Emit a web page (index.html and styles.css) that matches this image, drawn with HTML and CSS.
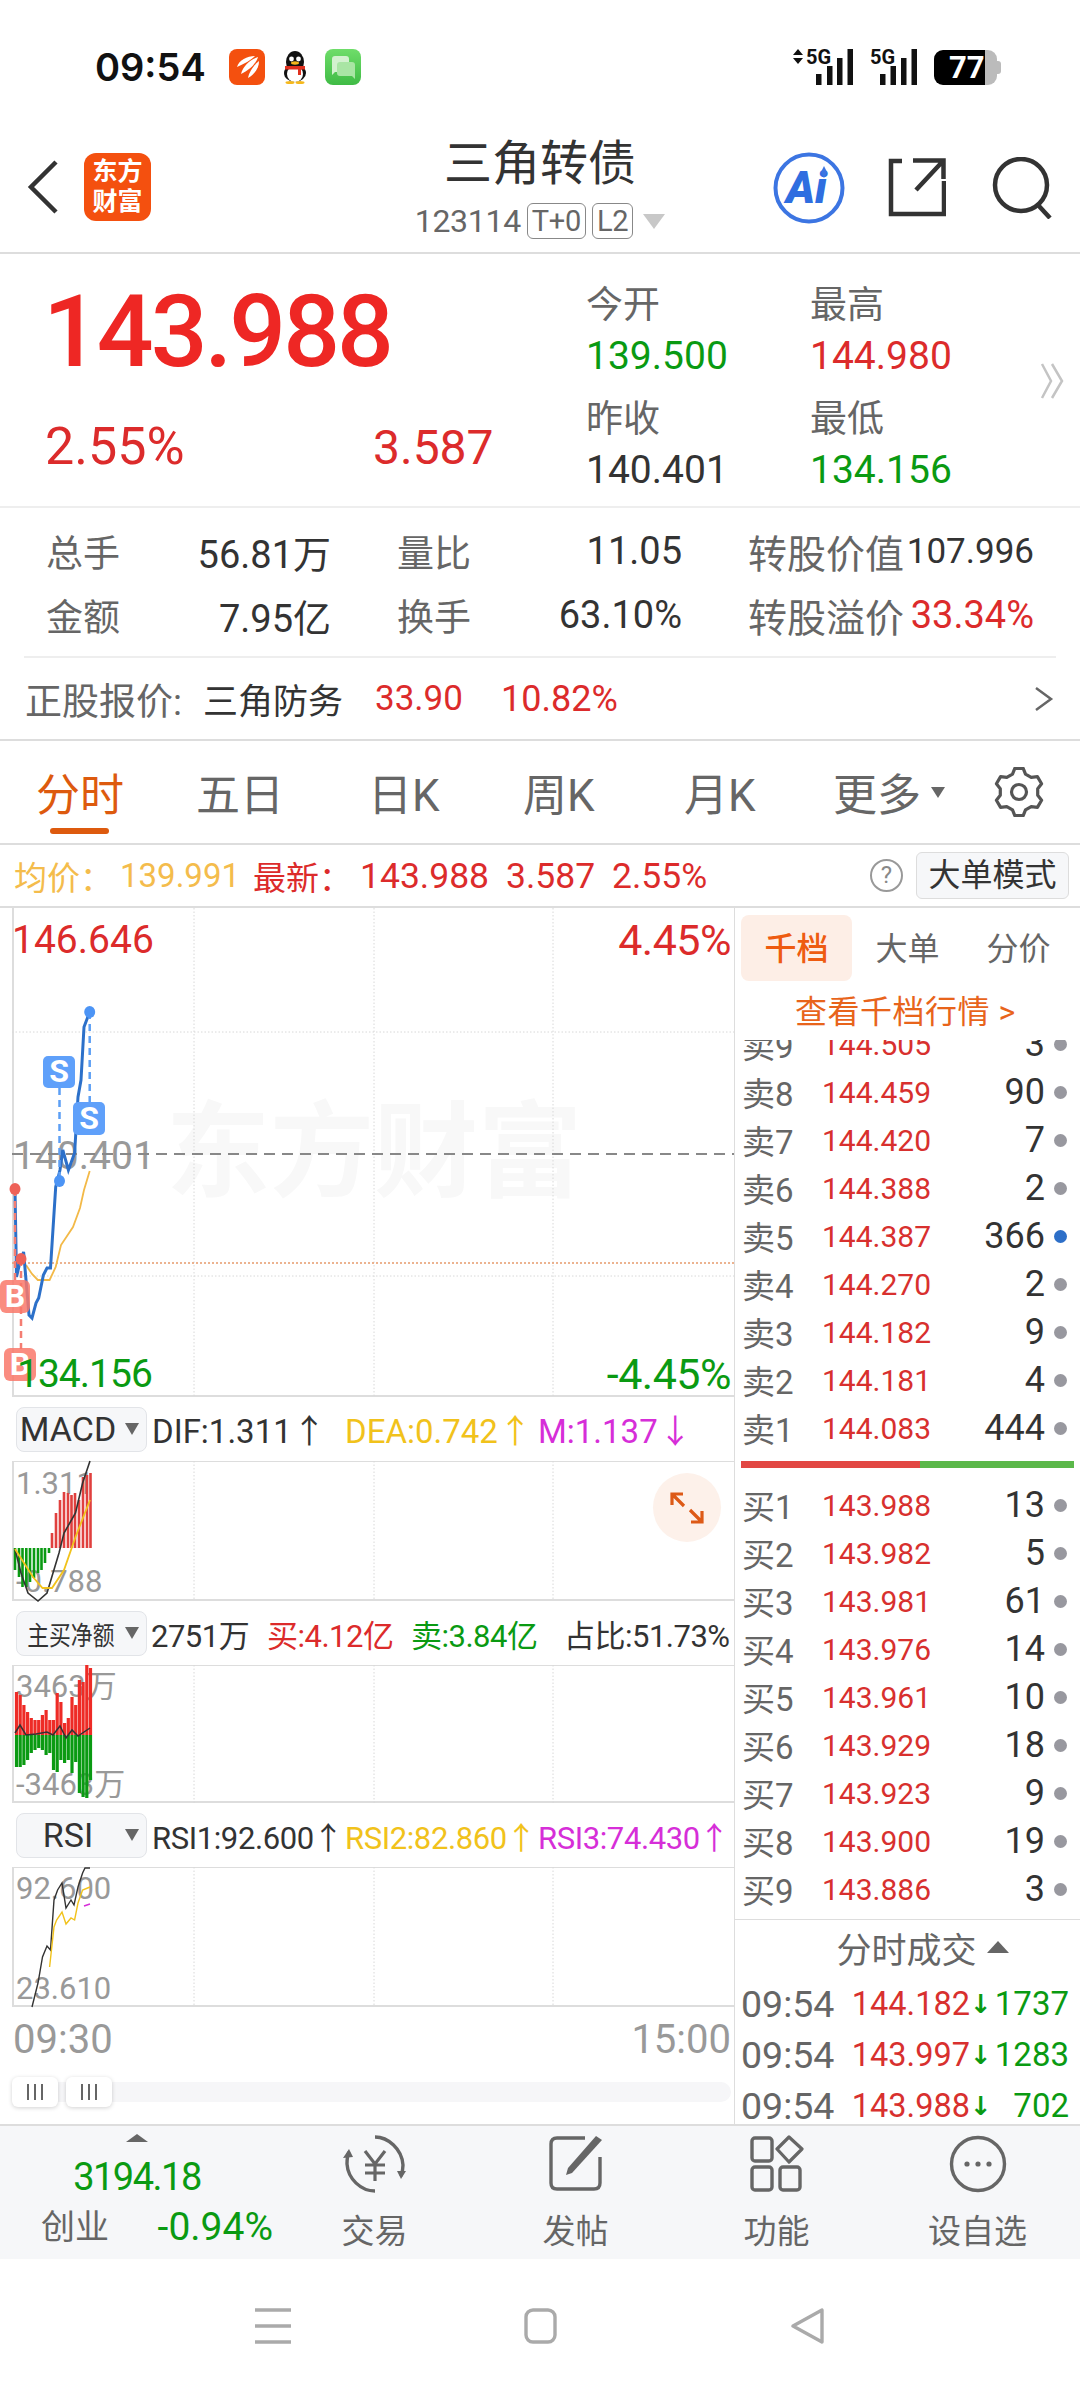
FILE: index.html
```html
<!DOCTYPE html>
<html lang="zh">
<head>
  <meta charset="UTF-8" />
  <meta name="viewport" content="width=device-width, initial-scale=1.0" />
  <title>三角转债</title>
  <link rel="stylesheet" href="styles.css">
</head>
<body>
<div class="page">

  <!-- Status bar -->
  <div class="status">
    <span class="clock">09:54</span>
    <svg class="app-icon" width="36" height="36" viewBox="0 0 36 36">
      <rect width="36" height="36" rx="8" fill="#f4500f"/>
      <path d="M8 18C10 11 18 7 26 7C22 11 15 15 8 18Z" fill="#fff"/>
      <path d="M12 25C14 17 21 11 29 8C27 15 20 21 12 25Z" fill="#fff"/>
      <path d="M19 29C20 23 25 16 30 12C30 19 26 25 19 29Z" fill="#fff"/>
    </svg>
    <svg class="qq-icon" width="28" height="33" viewBox="0 0 28 33">
      <ellipse cx="14" cy="11" rx="9" ry="11" fill="#111"/>
      <ellipse cx="14" cy="22" rx="11" ry="9" fill="#111"/>
      <ellipse cx="14" cy="23" rx="8" ry="8" fill="#fff"/>
      <circle cx="10.5" cy="8" r="2.4" fill="#fff"/>
      <circle cx="17.5" cy="8" r="2.4" fill="#fff"/>
      <ellipse cx="14" cy="12" rx="4" ry="1.7" fill="#f5b81c"/>
      <path d="M4 15H24V18.5H20V24H17V18.5H4Z" fill="#e0301e"/>
      <ellipse cx="9" cy="31.5" rx="4.5" ry="1.5" fill="#f5b81c"/>
      <ellipse cx="19" cy="31.5" rx="4.5" ry="1.5" fill="#f5b81c"/>
    </svg>
    <svg class="app-icon msg-icon" width="36" height="36" viewBox="0 0 36 36">
      <defs>
        <linearGradient id="msg-bg" x1="0" y1="0" x2="0" y2="1">
          <stop offset="0" stop-color="#6fdd6a"/>
          <stop offset="1" stop-color="#3fbb45"/>
        </linearGradient>
      </defs>
      <rect width="36" height="36" rx="8" fill="url(#msg-bg)"/>
      <path d="M10 7H21C23 7 24 8 24 10V20C24 22 23 23 21 23H10L7 26V10C7 8 8 7 10 7Z" fill="#d3f1cf"/>
      <path d="M15 13H27C29 13 30 14 30 16V30L27 27H15C13 27 12 26 12 24V16C12 14 13 13 15 13Z" fill="#a9e5a4"/>
    </svg>
    <div class="status-right">
      <svg class="net-svg" width="62" height="36" viewBox="0 0 62 36">
        <path d="M6 0L11 6H1ZM6 15L1 9H11Z" fill="#111"/>
        <text x="14" y="15" class="net-text">5G</text>
        <path d="M24 25h5.5v11h-5.5zM35 17h5.5v19h-5.5zM45 9h5.5v27h-5.5zM55.5 0h5.5v36h-5.5z" fill="#111"/>
      </svg>
      <svg class="net-svg" width="48" height="36" viewBox="0 0 48 36">
        <text x="0" y="15" class="net-text">5G</text>
        <path d="M10 25h5.5v11h-5.5zM20.5 17h5.5v19h-5.5zM31 9h5.5v27h-5.5zM41.5 0h5.5v36h-5.5z" fill="#111"/>
      </svg>
      <div class="battery"><span class="battery-num">77</span></div>
    </div>
  </div>

  <!-- Title bar -->
  <div class="topbar">
    <div class="top-left">
      <svg width="32" height="54" viewBox="0 0 32 54"><path d="M29 2L4 27L29 52" fill="none" stroke="#333" stroke-width="4.5"/></svg>
      <div class="logo">东方<br>财富</div>
    </div>
    <div class="top-title">
      <div class="name">三角转债</div>
      <div class="code">123114<span class="tag">T+0</span><span class="tag">L2</span><span class="code-caret"></span></div>
    </div>
    <div class="top-right">
      <svg width="72" height="72" viewBox="0 0 72 72">
        <circle cx="36" cy="36" r="33.5" fill="none" stroke="#3c75e2" stroke-width="4"/>
        <text x="13" y="51" class="ai-text">Ai</text>
        <path d="M51 14L54 20L51 26L48 20Z" fill="#3c75e2"/>
      </svg>
      <svg width="58" height="60" viewBox="0 0 58 60">
        <path d="M14 4H3V57H56V24" fill="none" stroke="#333" stroke-width="4.5"/>
        <path d="M25 3.5H55.5V22M55.5 3.5L28 33" fill="none" stroke="#333" stroke-width="4.5"/>
      </svg>
      <svg width="60" height="62" viewBox="0 0 60 62">
        <circle cx="29" cy="28" r="26" fill="none" stroke="#333" stroke-width="4.5"/>
        <path d="M46 48L58 61" stroke="#333" stroke-width="4.5"/>
      </svg>
    </div>
  </div>

  <!-- Price block -->
  <div class="quote">
    <div class="quote-main">
      <div class="price">143.988</div>
      <div class="change"><span class="change-pct">2.55%</span><span class="change-abs">3.587</span></div>
    </div>
    <div class="quote-grid">
      <div class="q-cell"><div class="q-label">今开</div><div class="q-val green">139.500</div></div>
      <div class="q-cell"><div class="q-label">最高</div><div class="q-val red">144.980</div></div>
      <div class="q-cell"><div class="q-label">昨收</div><div class="q-val">140.401</div></div>
      <div class="q-cell"><div class="q-label">最低</div><div class="q-val green">134.156</div></div>
    </div>
    <svg class="quote-more" width="24" height="36" viewBox="0 0 24 36">
      <path d="M2 1L11 18L2 35M12 1L22 18L12 35" fill="none" stroke="#c4c4c4" stroke-width="2.5"/>
    </svg>
  </div>

  <!-- Stats -->
  <div class="stats">
    <div class="stat"><span class="stat-label">总手</span><span>56.81万</span></div>
    <div class="stat"><span class="stat-label">量比</span><span>11.05</span></div>
    <div class="stat"><span class="stat-label wide">转股价值</span><span class="stat-tight">107.996</span></div>
    <div class="stat"><span class="stat-label">金额</span><span>7.95亿</span></div>
    <div class="stat"><span class="stat-label">换手</span><span>63.10%</span></div>
    <div class="stat"><span class="stat-label wide">转股溢价</span><span class="red">33.34%</span></div>
  </div>
  <div class="stock-line">
    <span class="stock-label">正股报价:</span>
    <span class="stock-name">三角防务</span>
    <span class="red stock-price">33.90</span>
    <span class="red stock-pct">10.82%</span>
    <svg class="stock-more" width="20" height="26" viewBox="0 0 20 26"><path d="M2 2L17 13L2 24" fill="none" stroke="#666" stroke-width="2.5"/></svg>
  </div>

  <!-- Period tabs -->
  <div class="tabs">
    <span class="tab active">分时</span>
    <span class="tab">五日</span>
    <span class="tab">日K</span>
    <span class="tab">周K</span>
    <span class="tab">月K</span>
    <span class="tab">更多<i class="tab-caret"></i></span>
    <svg class="gear" width="50" height="50" viewBox="0 0 50 50">
      <path d="M18.5 7.1L20.8 1.4H29.2L31.5 7.1L37.2 10.4L43.4 9.6L47.6 16.8L43.7 21.7V28.3L47.6 33.2L43.4 40.4L37.2 39.6L31.5 42.9L29.2 48.6H20.8L18.5 42.9L12.8 39.6L6.6 40.4L2.4 33.2L6.3 28.3V21.7L2.4 16.8L6.6 9.6L12.8 10.4Z" fill="none" stroke="#555" stroke-width="3.2" stroke-linejoin="round"/>
      <circle cx="25" cy="25" r="7.5" fill="none" stroke="#555" stroke-width="3.2"/>
    </svg>
  </div>

  <!-- Average / latest line -->
  <div class="infobar">
    <span class="avg">均价：</span><span class="avg avg-val">139.991</span>
    <span class="red info-new">最新：</span><span class="red info-price">143.988</span>
    <span class="red info-abs">3.587</span><span class="red info-pct">2.55%</span>
    <span class="help">?</span>
    <span class="mode-btn">大单模式</span>
  </div>

  <div class="main">
    <div class="charts">

      <!-- Intraday chart -->
      <div class="plot plot-main">
        <div class="watermark">东方财富</div>
        <span class="axis a-tl red">146.646</span>
        <span class="axis a-tr red">4.45%</span>
        <span class="axis a-ml">140.401</span>
        <svg class="plot-svg" width="734" height="490" viewBox="0 908 734 490">
          <path class="grid-line" d="M194 908V1398M374 908V1398M553 908V1398M12 1032H734M12 1276H734"/>
          <path d="M12 1154H734" stroke="#888" stroke-width="2" stroke-dasharray="11 7" fill="none"/>
          <path d="M12 1263H734" stroke="#e69a6c" stroke-width="1.5" stroke-dasharray="2 2" fill="none"/>
          <path d="M26 1265L32 1274L37.8 1280H49.6L55.7 1267L61 1245L73 1227L80 1208L84 1190L89.7 1171" fill="none" stroke="#f3b947" stroke-width="1.8"/>
          <path d="M15 1189L16.5 1277L20 1262L23.6 1252L29 1315L32 1318L36 1303L38.7 1298L43.4 1275L47 1268L50.5 1268L55.7 1187L60 1170L62.8 1150L68.4 1170L74.6 1153L78 1097L81 1080L84 1027L89.7 1012" fill="none" stroke="#2c70c9" stroke-width="3"/>
          <path d="M59.5 1088V1181M89.7 1012V1102" stroke="#5c9ff5" stroke-width="2.5" stroke-dasharray="7 5"/>
          <path d="M15 1189V1281M21 1259V1349" stroke="#f47d72" stroke-width="2.5" stroke-dasharray="7 5"/>
          <ellipse cx="89.7" cy="1012" rx="5.5" ry="6" fill="#4c94f5"/>
          <ellipse cx="59.5" cy="1181" rx="5.5" ry="6" fill="#4c94f5"/>
          <ellipse cx="15" cy="1189" rx="5.5" ry="6" fill="#ee6158"/>
          <ellipse cx="21" cy="1259" rx="5.5" ry="6" fill="#ee6158"/>
          <rect x="43" y="1056" width="32" height="32" rx="5" fill="#5fa0fa"/>
          <text x="59" y="1082" class="badge-text">S</text>
          <rect x="73" y="1102" width="32" height="33" rx="5" fill="#5fa0fa"/>
          <text x="89" y="1129" class="badge-text">S</text>
          <rect x="0" y="1280" width="30" height="33" rx="6" fill="#f9786a" fill-opacity=".85"/>
          <text x="15" y="1307" class="badge-text">B</text>
          <rect x="4" y="1348" width="32" height="33" rx="6" fill="#f9786a" fill-opacity=".85"/>
          <text x="20" y="1375" class="badge-text">B</text>
        </svg>
        <span class="axis a-bl green">134.156</span>
        <span class="axis a-br green">-4.45%</span>
      </div>

      <!-- MACD -->
      <div class="ind-head">
        <div class="ind-select"><span class="ind-name">MACD</span><i class="ind-caret"></i></div>
        <div class="ind-vals">
          <span class="dark">DIF:1.311<i class="arr">↑</i></span>
          <span class="yellow">DEA:0.742<i class="arr">↑</i></span>
          <span class="purple">M:1.137<i class="arr">↓</i></span>
        </div>
      </div>
      <div class="plot plot-sub">
        <span class="sub-axis s-macd-top">1.311</span>
        <span class="sub-axis s-macd-bot">-0.788</span>
        <svg class="plot-svg" width="734" height="140" viewBox="0 1461 734 140">
          <path class="grid-line" d="M194 1461V1601M374 1461V1601M553 1461V1601"/>
          <path d="M52 1548V1533M56 1548V1513M60 1548V1500M64 1548V1492M68 1548V1493M71.5 1548V1495M75 1548V1493M79 1548V1500M83 1548V1477M87 1548V1475M90.5 1548V1473" stroke="#e0403e" stroke-width="2.6"/>
          <path d="M15 1548V1570M19 1548V1577M22.5 1548V1587M26.3 1548V1587M30 1548V1582M34 1548V1578M38 1548V1573M41.5 1548V1570M45 1548V1563M49 1548V1553" stroke="#0a9a12" stroke-width="2.6"/>
          <path d="M15 1549L21 1573L28 1593L38 1601L47 1593L59 1553L64 1533L75.5 1513L82.6 1483L90 1461" fill="none" stroke="#333" stroke-width="1.6"/>
          <path d="M15 1549L33 1577L42.5 1588L52 1588L64 1570L75.5 1537L90 1500" fill="none" stroke="#f1c21b" stroke-width="1.8"/>
        </svg>
        <div class="expand">
          <svg width="34" height="32" viewBox="0 0 34 32">
            <path d="M2 13V2H13M2 2L14 14M32 19V30H21M32 30L20 18" fill="none" stroke="#dd5a17" stroke-width="3.2"/>
          </svg>
        </div>
      </div>

      <!-- Net buy -->
      <div class="ind-head">
        <div class="ind-select"><span class="ind-name ind-name-cn">主买净额</span><i class="ind-caret"></i></div>
        <div class="net-vals">
          <span class="dark net-a">2751万</span>
          <span class="red net-b">买:4.12亿</span>
          <span class="green net-c">卖:3.84亿</span>
          <span class="dark">占比:51.73%</span>
        </div>
      </div>
      <div class="plot plot-net">
        <span class="sub-axis s-net-top">3463万</span>
        <span class="sub-axis s-net-bot">-3463万</span>
        <svg class="plot-svg" width="734" height="138" viewBox="0 1665 734 138">
          <path class="grid-line" d="M194 1665V1803M374 1665V1803M553 1665V1803"/>
          <path d="M16.5 1735V1692M20.2 1735V1695M23.9 1735V1705M27.6 1735V1712M31.3 1735V1718M35 1735V1720M38.7 1735V1720M42.4 1735V1715M46.1 1735V1710M49.8 1735V1720M53.5 1735V1720M57.2 1735V1693M60.9 1735V1702M64.6 1735V1723M68.3 1735V1718M72 1735V1697M75.7 1735V1705M79.4 1735V1680M83.1 1735V1682M86.8 1735V1665M90.5 1735V1668" stroke="#ee2b26" stroke-width="3.2"/>
          <path d="M16.5 1735V1767M20.2 1735V1767M23.9 1735V1765M27.6 1735V1760M31.3 1735V1753M35 1735V1750M38.7 1735V1748M42.4 1735V1750M46.1 1735V1755M49.8 1735V1753M53.5 1735V1770M57.2 1735V1772M60.9 1735V1760M64.6 1735V1763M68.3 1735V1760M72 1735V1773M75.7 1735V1762M79.4 1735V1793M83.1 1735V1797M86.8 1735V1798M90.5 1735V1780" stroke="#0a9a12" stroke-width="3.2"/>
          <path d="M15 1733L20 1725L26 1735L36 1734L47 1732L53 1735L60 1726L66 1738L72 1730L78 1736L84 1732L90 1728" fill="none" stroke="#333" stroke-width="1.5"/>
        </svg>
      </div>

      <!-- RSI -->
      <div class="ind-head">
        <div class="ind-select"><span class="ind-name">RSI</span><i class="ind-caret"></i></div>
        <div class="ind-vals rsi-vals">
          <span class="dark">RSI1:92.600<i class="arr">↑</i></span>
          <span class="yellow">RSI2:82.860<i class="arr">↑</i></span>
          <span class="purple">RSI3:74.430<i class="arr">↑</i></span>
        </div>
      </div>
      <div class="plot plot-sub">
        <span class="sub-axis s-rsi-top">92.600</span>
        <span class="sub-axis s-rsi-bot">23.610</span>
        <svg class="plot-svg" width="734" height="140" viewBox="0 1867 734 140">
          <path class="grid-line" d="M194 1867V2007M374 1867V2007M553 1867V2007"/>
          <path d="M32 2007L38 1983L42.5 1957L47 1946L50.5 1950L54 1900L57.6 1890L62 1883L66 1908L71 1900L74 1905L78 1887L82.6 1873L85 1868L90 1868" fill="none" stroke="#333" stroke-width="1.4"/>
          <path d="M49.6 1967L54 1927L56.6 1920L62 1912L66 1924L71 1918L74.6 1920L78 1903L82.6 1890L90 1887" fill="none" stroke="#f1c21b" stroke-width="1.4"/>
          <path d="M84 1906L90 1904" fill="none" stroke="#d62ed8" stroke-width="1.4"/>
        </svg>
      </div>

      <div class="time-axis"><span>09:30</span><span>15:00</span></div>
      <div class="slider">
        <div class="handle"><i></i><i></i><i></i></div>
        <div class="handle"><i></i><i></i><i></i></div>
      </div>
    </div>

    <!-- Order book -->
    <div class="book">
      <div class="book-tabs">
        <span class="book-tab active">千档</span>
        <span class="book-tab">大单</span>
        <span class="book-tab">分价</span>
      </div>
      <div class="book-link">查看千档行情 &gt;</div>
      <div class="sell-list">
        <div class="row"><span class="lv">卖9</span><span class="px">144.505</span><span class="qty">3</span><i class="dot"></i></div>
        <div class="row"><span class="lv">卖8</span><span class="px">144.459</span><span class="qty">90</span><i class="dot"></i></div>
        <div class="row"><span class="lv">卖7</span><span class="px">144.420</span><span class="qty">7</span><i class="dot"></i></div>
        <div class="row"><span class="lv">卖6</span><span class="px">144.388</span><span class="qty">2</span><i class="dot"></i></div>
        <div class="row"><span class="lv">卖5</span><span class="px">144.387</span><span class="qty">366</span><i class="dot blue"></i></div>
        <div class="row"><span class="lv">卖4</span><span class="px">144.270</span><span class="qty">2</span><i class="dot"></i></div>
        <div class="row"><span class="lv">卖3</span><span class="px">144.182</span><span class="qty">9</span><i class="dot"></i></div>
        <div class="row"><span class="lv">卖2</span><span class="px">144.181</span><span class="qty">4</span><i class="dot"></i></div>
        <div class="row"><span class="lv">卖1</span><span class="px">144.083</span><span class="qty">444</span><i class="dot"></i></div>
      </div>
      <div class="ratio"><div class="ratio-buy"></div><div class="ratio-sell"></div></div>
      <div class="buy-list">
        <div class="row"><span class="lv">买1</span><span class="px">143.988</span><span class="qty">13</span><i class="dot"></i></div>
        <div class="row"><span class="lv">买2</span><span class="px">143.982</span><span class="qty">5</span><i class="dot"></i></div>
        <div class="row"><span class="lv">买3</span><span class="px">143.981</span><span class="qty">61</span><i class="dot"></i></div>
        <div class="row"><span class="lv">买4</span><span class="px">143.976</span><span class="qty">14</span><i class="dot"></i></div>
        <div class="row"><span class="lv">买5</span><span class="px">143.961</span><span class="qty">10</span><i class="dot"></i></div>
        <div class="row"><span class="lv">买6</span><span class="px">143.929</span><span class="qty">18</span><i class="dot"></i></div>
        <div class="row"><span class="lv">买7</span><span class="px">143.923</span><span class="qty">9</span><i class="dot"></i></div>
        <div class="row"><span class="lv">买8</span><span class="px">143.900</span><span class="qty">19</span><i class="dot"></i></div>
        <div class="row"><span class="lv">买9</span><span class="px">143.886</span><span class="qty">3</span><i class="dot"></i></div>
      </div>
      <div class="trade-head">分时成交<i class="trade-caret"></i></div>
      <div class="trade"><span class="t-time">09:54</span><span class="px">144.182</span><span class="t-arrow">↓</span><span class="t-qty">1737</span></div>
      <div class="trade"><span class="t-time">09:54</span><span class="px">143.997</span><span class="t-arrow">↓</span><span class="t-qty">1283</span></div>
      <div class="trade"><span class="t-time">09:54</span><span class="px">143.988</span><span class="t-arrow">↓</span><span class="t-qty">702</span></div>
    </div>
  </div>

  <!-- Bottom actions -->
  <div class="actions">
    <div class="index">
      <i class="index-caret"></i>
      <div class="index-val green">3194.18</div>
      <div class="index-row"><span class="index-name">创业</span><span class="green">-0.94%</span></div>
    </div>
    <div class="action">
      <svg width="66" height="58" viewBox="0 0 66 58">
        <path d="M33 2C46 2 60 14 61 30C61 34 60 38 59 41" fill="none" stroke="#666" stroke-width="3.4"/>
        <path d="M55 36L59 44L64 36" fill="#666"/>
        <path d="M33 56C19 56 6 44 5 29C5 25 5 21 7 17" fill="none" stroke="#666" stroke-width="3.4"/>
        <path d="M1 23L7 14L11 22" fill="#666"/>
        <path d="M23 16L33 29L43 16M33 29V46M23 30H43M23 38H43" fill="none" stroke="#666" stroke-width="3.2"/>
      </svg>
      <span>交易</span>
    </div>
    <div class="action">
      <svg width="56" height="58" viewBox="0 0 56 58">
        <path d="M37 3H9C5 3 3 5 3 9V48C3 52 5 54 9 54H46C50 54 52 52 52 48V22" fill="none" stroke="#666" stroke-width="3.4"/>
        <path d="M48 1L54 5L24 38L18 40L20 33Z" fill="#666"/>
      </svg>
      <span>发帖</span>
    </div>
    <div class="action">
      <svg width="54" height="58" viewBox="0 0 54 58">
        <rect x="2" y="3" width="20" height="23" rx="3" fill="none" stroke="#666" stroke-width="3.4"/>
        <path d="M39 2L52 14L39 27L27 14Z" fill="none" stroke="#666" stroke-width="3.2" stroke-linejoin="round"/>
        <rect x="2" y="32" width="20" height="23" rx="3" fill="none" stroke="#666" stroke-width="3.4"/>
        <rect x="30" y="32" width="20" height="23" rx="3" fill="none" stroke="#666" stroke-width="3.4"/>
      </svg>
      <span>功能</span>
    </div>
    <div class="action">
      <svg width="58" height="58" viewBox="0 0 58 58">
        <circle cx="29" cy="29" r="26.5" fill="none" stroke="#666" stroke-width="3.4"/>
        <circle cx="18" cy="29" r="2.6" fill="#666"/>
        <circle cx="29" cy="29" r="2.6" fill="#666"/>
        <circle cx="40" cy="29" r="2.6" fill="#666"/>
      </svg>
      <span>设自选</span>
    </div>
  </div>

  <!-- System navigation -->
  <div class="navbar">
    <svg width="36" height="36" viewBox="0 0 36 36"><path d="M0 2H36M0 18H36M0 34H36" stroke="#aaa" stroke-width="3.4"/></svg>
    <svg width="33" height="36" viewBox="0 0 33 36"><rect x="2" y="2" width="29" height="32" rx="7" fill="none" stroke="#aaa" stroke-width="3.4"/></svg>
    <svg width="35" height="36" viewBox="0 0 35 36"><path d="M32 2V34L3 18Z" fill="none" stroke="#aaa" stroke-width="3.4" stroke-linejoin="round"/></svg>
  </div>
</div>
</body>
</html>
```

FILE: styles.css
```css
* {
  box-sizing: border-box;
}
body {
  margin: 0;
  background: #fff;
  color: #333;
  font-family: Roboto, 'Noto Sans CJK SC', sans-serif;
}
i {
  font-style: normal;
}
svg {
  display: block;
}
.page {
  width: 1080px;
  height: 2392px;
  overflow: hidden;
}
.red { color: #dc2b2b; }
.green { color: #0a9a12; }
.dark { color: #333; }
.yellow { color: #f1c21b; }
.purple { color: #d62ed8; }

/* Status bar */
.status {
  height: 134px;
  padding-left: 95px;
  display: flex;
  align-items: center;
}
.clock {
  font-family: Inter, sans-serif;
  font-size: 38px;
  font-weight: 600;
  color: #111;
  width: 134px;
}
.qq-icon {
  margin-left: 16px;
}
.msg-icon {
  margin-left: 16px;
}
.status-right {
  margin-left: auto;
  margin-right: 79px;
  display: flex;
  align-items: center;
  gap: 16px;
}
.net-svg {
  overflow: visible;
}
.net-text {
  font-size: 20px;
  font-weight: 700;
  fill: #111;
}
.battery {
  position: relative;
  width: 63px;
  height: 35px;
  margin-right: 4px;
  padding-left: 15px;
  border-radius: 9px;
  background: linear-gradient(90deg, #000 81%, #bbb 81%);
  color: #fff;
}
.battery::after {
  content: "";
  position: absolute;
  right: -4px;
  top: 11px;
  width: 4px;
  height: 13px;
  border-radius: 0 3px 3px 0;
  background: #bbb;
}
.battery-num {
  display: block;
  font-size: 31px;
  font-weight: 700;
  line-height: 35px;
}

/* Title bar */
.topbar {
  height: 120px;
  display: grid;
  grid-template-columns: 1fr auto 1fr;
  border-bottom: 2px solid #ddd;
}
.top-left {
  padding: 19px 0 0 27px;
  display: flex;
  gap: 25px;
  align-items: flex-start;
}
.top-left svg {
  margin-top: 7px;
}
.logo {
  width: 67px;
  height: 68px;
  border-radius: 12px;
  background: #f4500f;
  color: #fff;
  font-size: 25px;
  font-weight: 700;
  line-height: 30px;
  text-align: center;
  padding-top: 4px;
}
.top-title {
  text-align: center;
  padding-top: 4px;
}
.name {
  font-size: 48px;
  line-height: 52px;
  color: #333;
  margin-bottom: 13px;
}
.code {
  display: flex;
  align-items: center;
  font-size: 32px;
  letter-spacing: -.3px;
  color: #666;
  height: 36px;
}
.tag {
  margin-left: 6px;
  padding: 0 4px;
  height: 36px;
  line-height: 34px;
  border: 1px solid #888;
  border-radius: 6px;
  font-size: 29px;
}
.code-caret {
  margin-left: 10px;
  border-left: 11px solid transparent;
  border-right: 11px solid transparent;
  border-top: 15px solid #c8c8c8;
}
.top-right {
  display: flex;
  justify-content: flex-end;
  gap: 43px;
  padding: 18px 28px 0 0;
  align-items: flex-start;
}
.top-right svg:nth-child(2),
.top-right svg:nth-child(3) {
  margin-top: 5px;
}
.top-right svg:nth-child(3) {
  margin-left: 3px;
}
.ai-text {
  font-size: 44px;
  font-weight: 900;
  font-style: italic;
  fill: #2f6ee0;
}

/* Price block */
.quote {
  height: 254px;
  display: flex;
  border-bottom: 2px solid #eee;
  position: relative;
}
.quote-main {
  width: 586px;
  padding-left: 45px;
}
.price {
  font-size: 100px;
  font-weight: 500;
  letter-spacing: -3px;
  color: #ee2724;
  line-height: 110px;
  margin-top: 23px;
  margin-left: -2px;
}
.change {
  margin-top: 32px;
  display: flex;
  align-items: baseline;
  line-height: 56px;
  color: #dc2b2b;
}
.change-pct {
  font-size: 52px;
  width: 328px;
}
.change-abs {
  font-size: 48px;
}
.quote-grid {
  display: grid;
  grid-template-columns: 224px 224px;
  grid-auto-rows: 114px;
  padding-top: 28px;
}
.q-label {
  font-size: 37px;
  line-height: 48px;
  color: #666;
}
.q-val {
  font-size: 39px;
  line-height: 50px;
  margin-top: 1px;
}
.quote-more {
  position: absolute;
  right: 16px;
  top: 109px;
}

/* Stats */
.stats {
  margin: 0 24px;
  padding: 11px 0 0 22px;
  display: grid;
  grid-template-columns: 285px 285px 286px;
  column-gap: 66px;
  grid-auto-rows: 64px;
  border-bottom: 2px solid #eee;
  height: 150px;
  font-size: 38px;
}
.stat {
  display: flex;
  justify-content: space-between;
  align-items: center;
  white-space: nowrap;
}
.stat-label {
  color: #666;
  font-size: 37px;
}
.stat-label.wide {
  font-size: 39px;
}
.stat-tight {
  font-size: 35px;
}
.stock-line {
  height: 83px;
  padding-left: 25px;
  display: flex;
  align-items: center;
  font-size: 35px;
  border-bottom: 2px solid #ddd;
}
.stock-label {
  color: #666;
  font-size: 37px;
  width: 178px;
  white-space: nowrap;
}
.stock-name {
  width: 172px;
}
.stock-price {
  width: 126px;
}
.stock-pct {
  font-size: 36px;
}
.stock-more {
  margin-left: auto;
  margin-right: 26px;
}

/* Period tabs */
.tabs {
  height: 104px;
  padding-left: 36px;
  display: grid;
  grid-template-columns: 160px 172px 155px 161px 149px 161px auto;
  align-items: center;
  border-bottom: 2px solid #ddd;
  font-size: 44px;
  color: #666;
}
.tab {
  position: relative;
  display: flex;
  align-items: center;
  white-space: nowrap;
}
.tab.active {
  color: #dd5a0e;
}
.tab.active::after {
  content: "";
  position: absolute;
  left: 14px;
  width: 59px;
  top: 68px;
  height: 6px;
  border-radius: 3px;
  background: #dd5a0e;
}
.tab-caret {
  margin-left: 10px;
  border-left: 7px solid transparent;
  border-right: 7px solid transparent;
  border-top: 11px solid #666;
}

/* Info bar */
.infobar {
  height: 63px;
  padding-left: 14px;
  display: flex;
  align-items: center;
  font-size: 35.5px;
  border-bottom: 2px solid #ddd;
  white-space: nowrap;
}
.avg {
  color: #f4bc4c;
  font-size: 33px;
}
.avg-val {
  margin-left: 7px;
  width: 133px;
}
.info-new {
  width: 107px;
  font-size: 33px;
}
.info-price {
  width: 146px;
}
.info-abs {
  width: 106px;
}
.help {
  margin-left: auto;
  width: 33px;
  height: 33px;
  border: 2px solid #999;
  border-radius: 50%;
  color: #888;
  font-size: 24px;
  line-height: 29px;
  text-align: center;
}
.mode-btn {
  margin: 0 11px 0 13px;
  width: 153px;
  height: 47px;
  background: #f6f7f9;
  border: 1px solid #ddd;
  border-radius: 6px;
  font-size: 32px;
  line-height: 45px;
  text-align: center;
}

/* Charts column */
.main {
  display: flex;
  height: 1216px;
}
.charts {
  width: 735px;
  flex: none;
  border-right: 1px solid #ddd;
}
.plot {
  position: relative;
  margin-left: 12px;
  border-left: 2px solid #ddd;
  border-bottom: 2px solid #ddd;
}
.plot-main {
  height: 489px;
}
.plot-sub {
  height: 140px;
  border-top: 1px solid #ddd;
}
.plot-net {
  height: 138px;
  border-top: 1px solid #ddd;
}
.plot-svg {
  position: absolute;
  left: -14px;
  top: 0;
  overflow: visible;
}
.plot-sub .plot-svg,
.plot-net .plot-svg {
  top: -1px;
}
.grid-line {
  fill: none;
  stroke: #d8d8d8;
  stroke-width: 1;
  stroke-dasharray: 1.5 2;
}
.badge-text {
  font-size: 32px;
  font-weight: 700;
  fill: #fff;
  text-anchor: middle;
}
.watermark {
  position: absolute;
  left: 152px;
  top: 176px;
  font-size: 104px;
  font-weight: 700;
  line-height: 140px;
  color: #f8f8f8;
  white-space: nowrap;
}
.axis {
  position: absolute;
  font-size: 39px;
  line-height: 44px;
}
.a-tl { left: -2px; top: 10px; }
.a-tr { right: 3px; top: 10px; font-size: 43px; letter-spacing: -.5px; }
.a-ml { left: -1px; top: 226px; color: #999; }
.a-bl { left: 3px; top: 444px; letter-spacing: -1px; }
.a-br { right: 3px; top: 444px; font-size: 43px; letter-spacing: -.5px; }
.ind-head {
  height: 64px;
  display: flex;
  align-items: center;
  padding-left: 16px;
  white-space: nowrap;
}
.ind-select {
  width: 131px;
  height: 45px;
  display: flex;
  align-items: center;
  background: #f6f7f9;
  border: 1px solid #e2e4e8;
  border-radius: 8px;
  flex: none;
}
.ind-name {
  width: 102px;
  text-align: center;
  font-size: 34px;
}
.ind-name-cn {
  font-size: 26px;
  display: inline-block;
  transform: scaleX(.84);
  white-space: nowrap;
  position: relative;
  left: 2px;
}
.ind-caret {
  margin-left: 6px;
  border-left: 7px solid transparent;
  border-right: 7px solid transparent;
  border-top: 12px solid #666;
}
.ind-vals {
  margin-left: 5px;
  display: grid;
  grid-template-columns: 193px 193px auto;
  font-size: 33px;
}
.rsi-vals {
  font-size: 31px;
  letter-spacing: -.4px;
}
.arr {
  margin-left: 1px;
  letter-spacing: -10px;
}
.rsi-vals .arr {
  margin-left: -1px;
}
.net-vals {
  margin-left: 4px;
  display: flex;
  font-size: 31px;
  letter-spacing: -.5px;
}
.net-a { width: 116px; }
.net-b { width: 144px; }
.net-c { width: 153px; }
.sub-axis {
  position: absolute;
  left: 2px;
  font-size: 31px;
  line-height: 34px;
  color: #999;
}
.s-macd-top { top: 5px; }
.s-macd-bot { top: 103px; }
.s-net-top { top: 4px; }
.s-net-bot { top: 102px; }
.s-rsi-top { top: 4px; }
.s-rsi-bot { top: 104px; }
.expand {
  position: absolute;
  left: 639px;
  top: 11px;
  width: 68px;
  height: 69px;
  border-radius: 50%;
  background: #fdf1ea;
  display: flex;
  align-items: center;
  justify-content: center;
}
.time-axis {
  height: 64px;
  padding: 0 3px 0 13px;
  display: flex;
  align-items: center;
  justify-content: space-between;
  font-size: 40px;
  color: #999;
}
.slider {
  margin: 11px 3px 0 12px;
  height: 20px;
  border-radius: 10px;
  background: #f6f6f8;
  display: flex;
  align-items: center;
  gap: 8px;
}
.handle {
  width: 46px;
  height: 30px;
  flex: none;
  background: #fff;
  border-radius: 6px;
  box-shadow: 0 1px 4px rgba(0,0,0,.18);
  display: flex;
  align-items: center;
  justify-content: center;
  gap: 5px;
}
.handle i {
  width: 2px;
  height: 16px;
  background: #666;
}

/* Order book */
.book {
  flex: 1;
  overflow: hidden;
  padding-top: 7px;
}
.book-tabs {
  margin-left: 6px;
  display: flex;
  height: 66px;
}
.book-tab {
  width: 111px;
  font-size: 32px;
  line-height: 68px;
  text-align: center;
  color: #666;
}
.book-tab.active {
  background: #fdeee6;
  border-radius: 8px;
  color: #ee5b10;
  font-weight: 500;
}
.book-link {
  height: 59px;
  margin-left: 60px;
  font-size: 32px;
  line-height: 62px;
  letter-spacing: .5px;
  color: #e8641b;
  white-space: nowrap;
}
.sell-list {
  height: 412px;
  overflow: hidden;
}
.sell-list .row:first-child {
  margin-top: -20px;
}
.row {
  height: 48px;
  padding-left: 7px;
  display: grid;
  grid-template-columns: 55px 134px 114px 22px;
  align-items: center;
}
.lv {
  font-size: 33px;
  color: #666;
  white-space: nowrap;
}
.px {
  font-size: 30px;
  color: #d8302e;
  text-align: right;
}
.qty {
  font-size: 36px;
  color: #333;
  text-align: right;
}
.dot {
  margin-left: 9px;
  width: 13px;
  height: 13px;
  border-radius: 50%;
  background: #98989f;
}
.dot.blue {
  background: #2d6fc8;
}
.ratio {
  display: flex;
  height: 7px;
  margin: 9px 6px 0 6px;
}
.ratio-buy {
  width: 179px;
  background: #e24743;
}
.ratio-sell {
  flex: 1;
  background: #5bb84a;
}
.buy-list {
  margin-top: 13px;
  padding-bottom: 6px;
  border-bottom: 1px solid #ddd;
}
.trade-head {
  height: 58px;
  padding: 0 0 4px 30px;
  display: flex;
  align-items: center;
  justify-content: center;
  gap: 10px;
  font-size: 35px;
  color: #666;
}
.trade-caret {
  border-left: 11px solid transparent;
  border-right: 11px solid transparent;
  border-bottom: 12px solid #666;
}
.trade {
  height: 51px;
  padding-left: 6px;
  display: grid;
  grid-template-columns: 105px 124px 20px 79px;
  align-items: center;
  white-space: nowrap;
}
.t-time {
  font-size: 37.5px;
  color: #666;
}
.trade .px {
  font-size: 32.5px;
}
.t-arrow {
  font-family: 'DejaVu Sans', sans-serif;
  font-size: 26px;
  font-weight: 700;
  color: #0a9a12;
  text-align: center;
}
.t-qty {
  font-size: 33px;
  color: #0a9a12;
  text-align: right;
}

/* Bottom actions */
.actions {
  height: 135px;
  background: #f6f7f9;
  border-top: 2px solid #ddd;
  display: grid;
  grid-template-columns: 274px repeat(4, 201px);
}
.index {
  padding-top: 8px;
  display: flex;
  flex-direction: column;
  align-items: center;
}
.index-caret {
  border-left: 11px solid transparent;
  border-right: 11px solid transparent;
  border-bottom: 8px solid #666;
}
.index-val {
  font-size: 38px;
  letter-spacing: -1.5px;
  line-height: 46px;
  margin-top: 12px;
}
.index-row {
  width: 232px;
  align-self: flex-start;
  margin: 5px 0 0 41px;
  display: flex;
  justify-content: space-between;
  font-size: 39px;
  line-height: 44px;
}
.index-name {
  font-size: 34px;
  color: #666;
}
.action {
  padding-top: 9px;
  display: flex;
  flex-direction: column;
  align-items: center;
  gap: 14px;
  font-size: 33px;
  line-height: 50px;
  color: #666;
}

/* System nav */
.navbar {
  height: 133px;
  display: flex;
  align-items: center;
  justify-content: center;
  gap: 233px;
}
```
